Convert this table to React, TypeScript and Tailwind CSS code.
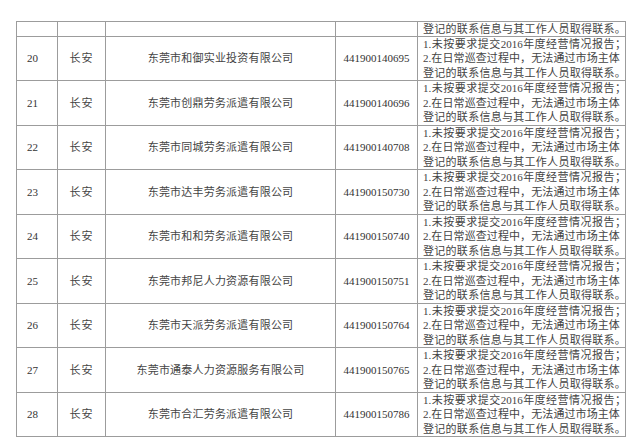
import React from "react";

type Row = { no: string; area: string; name: string; code: string };

const rows: Row[] = [
  { no: "20", area: "长安", name: "东莞市和御实业投资有限公司", code: "441900140695" },
  { no: "21", area: "长安", name: "东莞市创鼎劳务派遣有限公司", code: "441900140696" },
  { no: "22", area: "长安", name: "东莞市同城劳务派遣有限公司", code: "441900140708" },
  { no: "23", area: "长安", name: "东莞市达丰劳务派遣有限公司", code: "441900150730" },
  { no: "24", area: "长安", name: "东莞市和和劳务派遣有限公司", code: "441900150740" },
  { no: "25", area: "长安", name: "东莞市邦尼人力资源有限公司", code: "441900150751" },
  { no: "26", area: "长安", name: "东莞市天派劳务派遣有限公司", code: "441900150764" },
  { no: "27", area: "长安", name: "东莞市通泰人力资源服务有限公司", code: "441900150765" },
  { no: "28", area: "长安", name: "东莞市合汇劳务派遣有限公司", code: "441900150786" },
];

const reasons = [
  "1.未按要求提交2016年度经营情况报告；",
  "2.在日常巡查过程中，无法通过市场主体",
  "登记的联系信息与其工作人员取得联系。",
];

const cell = "border-r border-b border-[#9c9c9c] flex items-center";

// one line, characters spread over the full cell width (like the printed table)
const Line = ({ text }: { text: string }) => {
  const parts = text.match(/[0-9]+\.?|[^0-9]/g) ?? [];
  return (
    <div className="flex justify-between leading-[14.5px]">
      {parts.map((p, i) => (
        <span key={i} className={p === "。" || p === "；" ? "-mr-[6px]" : ""}>
          {p}
        </span>
      ))}
    </div>
  );
};

export default function App() {
  return (
    <div className="min-h-screen bg-white pt-[21px] pl-[16px] font-['Liberation_Serif','Noto_Sans_CJK_SC',serif] text-[11px] text-[#444]">
      <div className="grid w-[610px] grid-cols-[41px_48px_230px_82px_208px] border-l border-t border-[#9c9c9c]">
        {/* tail of the previous row */}
        <div className={`${cell} h-[15px]`} />
        <div className={`${cell} h-[15px]`} />
        <div className={`${cell} h-[15px]`} />
        <div className={`${cell} h-[15px]`} />
        <div className={`${cell} h-[15px] pl-[5px] pr-[5px]`}>
          <div className="w-full">
            <Line text={reasons[2]} />
          </div>
        </div>

        {rows.map((r, i) => {
          const h = i % 2 === 0 ? "h-[44px]" : "h-[45px]";
          return (
            <React.Fragment key={r.no}>
              <div className={`${cell} ${h} pl-[10px] text-[#333]`}>{r.no}</div>
              <div className={`${cell} ${h} justify-center tracking-[1px]`}>{r.area}</div>
              <div className={`${cell} ${h} justify-center tracking-[0.2px]`}>{r.name}</div>
              <div className={`${cell} ${h} justify-center text-[#333]`}>{r.code}</div>
              <div className={`${cell} ${h} pl-[5px] pr-[5px]`}>
                <div className="w-full">
                  {reasons.map((t) => (
                    <Line key={t} text={t} />
                  ))}
                </div>
              </div>
            </React.Fragment>
          );
        })}
      </div>
    </div>
  );
}
